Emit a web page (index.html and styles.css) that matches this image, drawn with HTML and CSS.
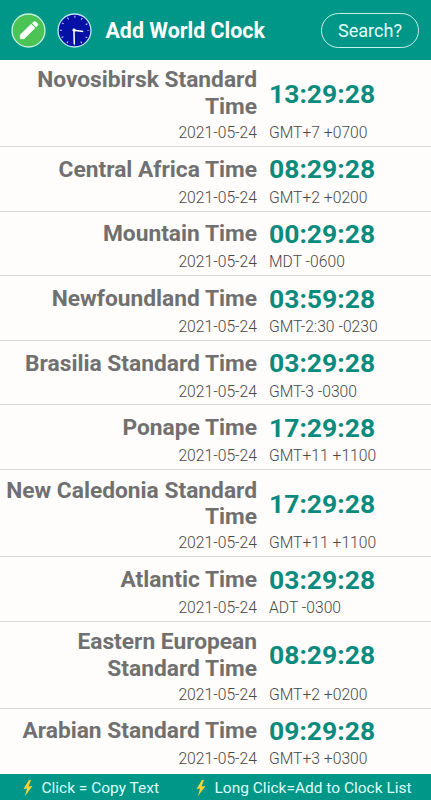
FILE: index.html
```html
<!DOCTYPE html>
<html lang="en">
<head>
<meta charset="utf-8">
<title>Add World Clock</title>
<link rel="stylesheet" href="styles.css">
</head>
<body>
<header class="bar">
  <svg class="icon" viewBox="0 0 34 34"><circle cx="17" cy="17" r="16" fill="#4bc455" stroke="#c4f2dc" stroke-width="1.3"/><path d="M9 25v-3.7l10.6-10.4 3.7 3.7L12.7 25zM20.8 9.9l1.3-1.3q.9-.8 1.8 0l1.8 1.8q.8.9 0 1.8l-1.3 1.3z" fill="#fff" stroke="#fff" stroke-width=".7" stroke-linejoin="round"/></svg>
  <svg class="icon clock" viewBox="0 0 34 34"><circle cx="17" cy="17" r="16" fill="#0510a5" stroke="#b9e5ef" stroke-width="1.3"/><circle cx="17" cy="17" r="13.3" fill="none" stroke="#d5dcf5" stroke-width="2" stroke-dasharray="1 5.964" stroke-dashoffset=".5"/><path d="M16.4 15l.4 15M15 16.5l10.5 1.5" stroke="#fff" stroke-width="1.5" fill="none"/><circle cx="17" cy="16.8" r="1.3" fill="#fff"/></svg>
  <h1 class="title">Add World Clock</h1>
  <button class="search">Search?</button>
</header>
<main class="list">
  <section class="row double"><h2 class="name">Novosibirsk Standard Time</h2><div class="time">13:29:28</div><div class="date">2021-05-24</div><div class="zone">GMT+7 +0700</div></section>
  <section class="row"><h2 class="name">Central Africa Time</h2><div class="time">08:29:28</div><div class="date">2021-05-24</div><div class="zone">GMT+2 +0200</div></section>
  <section class="row"><h2 class="name">Mountain Time</h2><div class="time">00:29:28</div><div class="date">2021-05-24</div><div class="zone">MDT -0600</div></section>
  <section class="row"><h2 class="name">Newfoundland Time</h2><div class="time">03:59:28</div><div class="date">2021-05-24</div><div class="zone">GMT-2:30 -0230</div></section>
  <section class="row"><h2 class="name">Brasilia Standard Time</h2><div class="time">03:29:28</div><div class="date">2021-05-24</div><div class="zone">GMT-3 -0300</div></section>
  <section class="row"><h2 class="name">Ponape Time</h2><div class="time">17:29:28</div><div class="date">2021-05-24</div><div class="zone">GMT+11 +1100</div></section>
  <section class="row double"><h2 class="name">New Caledonia Standard Time</h2><div class="time">17:29:28</div><div class="date">2021-05-24</div><div class="zone">GMT+11 +1100</div></section>
  <section class="row"><h2 class="name">Atlantic Time</h2><div class="time">03:29:28</div><div class="date">2021-05-24</div><div class="zone">ADT -0300</div></section>
  <section class="row double"><h2 class="name">Eastern European Standard Time</h2><div class="time">08:29:28</div><div class="date">2021-05-24</div><div class="zone">GMT+2 +0200</div></section>
  <section class="row"><h2 class="name">Arabian Standard Time</h2><div class="time">09:29:28</div><div class="date">2021-05-24</div><div class="zone">GMT+3 +0300</div></section>
</main>
<footer class="hints">
  <svg class="bolt" viewBox="0 0 12 18"><path d="M7 1L1.5 10l3.5-.5L3 17l7.5-10-4 .6L9 1z" fill="#f8d338"/></svg><span class="copy">Click = Copy Text</span>
  <svg class="bolt" viewBox="0 0 12 18"><path d="M7 1L1.5 10l3.5-.5L3 17l7.5-10-4 .6L9 1z" fill="#f8d338"/></svg><span class="add">Long Click=Add to Clock List</span>
</footer>
</body>
</html>
```
FILE: styles.css
```css
* { box-sizing: border-box; }
body {
  margin: 0;
  height: 800px;
  overflow: hidden;
  display: flex;
  flex-direction: column;
  background: #fefdfc;
  font-family: Roboto, sans-serif;
}
h1, h2 { margin: 0; }
.bar {
  flex: none;
  height: 60px;
  padding: 0 12px 0 11px;
  display: flex;
  align-items: center;
  background: #009688;
  color: #fff;
}
.icon { width: 35px; height: 35px; }
.clock { margin-left: 10.5px; }
.title {
  margin: 1px 0 0 14px;
  font-size: 21.4px;
  font-weight: 700;
  white-space: nowrap;
}
.search {
  margin-left: auto;
  width: 98px;
  height: 35px;
  padding: 1px 0 0;
  border: 1.3px solid #c5f0e9;
  border-radius: 18px;
  background: none;
  color: #e4fffb;
  font: 400 18.1px Roboto, sans-serif;
}
.list { flex: none; height: 713.5px; overflow: hidden; }
.row {
  height: 64.65px;
  padding-top: 8.6px;
  display: grid;
  grid-template-columns: 257px 1fr;
  grid-template-rows: 28px 28.6px;
  column-gap: 12px;
  align-items: center;
  border-bottom: 1px solid #d9d9d9;
}
.row:last-child { border-bottom: 0; }
.double {
  height: 86.9px;
  padding-top: 6.5px;
  grid-template-rows: 54px 25.4px;
}
.name {
  padding-top: 1.4px;
  font-size: 22.75px;
  line-height: 26.8px;
  font-weight: 700;
  color: #707070;
  text-align: right;
}
.time {
  font-size: 26.5px;
  line-height: 28px;
  font-weight: 700;
  color: #0a8b7d;
}
.date, .zone {
  font-size: 15.7px;
  line-height: 24px;
  font-weight: 300;
  color: #484848;
}
.date { text-align: right; }
.hints {
  flex: 1;
  display: flex;
  align-items: center;
  padding: 2px 0 0 22px;
  background: #009688;
  color: #dcfffb;
  font-size: 15.5px;
  white-space: nowrap;
}
.bolt { width: 12px; height: 18px; margin-right: 7.4px; }
.copy { margin-right: 36px; }
```
